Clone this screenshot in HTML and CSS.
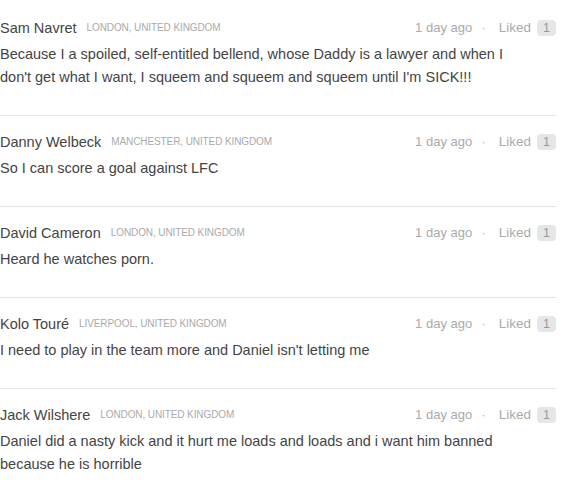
FILE: index.html
```html
<!DOCTYPE html>
<html lang="en">
<head>
    <meta charset="UTF-8">
    <title>Comments</title>
    <link rel="stylesheet" href="styles.css">
</head>
<body>
    <ul class="comments">
        <li class="comment">
            <div class="comment-head">
                <span class="author">Sam Navret</span>
                <span class="location">London, United Kingdom</span>
                <span class="meta">
                    <span class="time">1 day ago</span>
                    <span class="sep">&middot;</span>
                    <span class="liked">Liked</span>
                    <span class="count">1</span>
                </span>
            </div>
            <p class="comment-text">Because I a spoiled, self-entitled bellend, whose Daddy is a lawyer and when I don't get what I want, I squeem and squeem and squeem until I'm SICK!!!</p>
        </li>
        <li class="comment">
            <div class="comment-head">
                <span class="author">Danny Welbeck</span>
                <span class="location">Manchester, United Kingdom</span>
                <span class="meta">
                    <span class="time">1 day ago</span>
                    <span class="sep">&middot;</span>
                    <span class="liked">Liked</span>
                    <span class="count">1</span>
                </span>
            </div>
            <p class="comment-text">So I can score a goal against LFC</p>
        </li>
        <li class="comment">
            <div class="comment-head">
                <span class="author">David Cameron</span>
                <span class="location">London, United Kingdom</span>
                <span class="meta">
                    <span class="time">1 day ago</span>
                    <span class="sep">&middot;</span>
                    <span class="liked">Liked</span>
                    <span class="count">1</span>
                </span>
            </div>
            <p class="comment-text">Heard he watches porn.</p>
        </li>
        <li class="comment">
            <div class="comment-head">
                <span class="author">Kolo Touré</span>
                <span class="location">Liverpool, United Kingdom</span>
                <span class="meta">
                    <span class="time">1 day ago</span>
                    <span class="sep">&middot;</span>
                    <span class="liked">Liked</span>
                    <span class="count">1</span>
                </span>
            </div>
            <p class="comment-text">I need to play in the team more and Daniel isn't letting me</p>
        </li>
        <li class="comment">
            <div class="comment-head">
                <span class="author">Jack Wilshere</span>
                <span class="location">London, United Kingdom</span>
                <span class="meta">
                    <span class="time">1 day ago</span>
                    <span class="sep">&middot;</span>
                    <span class="liked">Liked</span>
                    <span class="count">1</span>
                </span>
            </div>
            <p class="comment-text">Daniel did a nasty kick and it hurt me loads and loads and i want him banned because he is horrible</p>
        </li>
    </ul>
</body>
</html>
```

FILE: styles.css
```css
/* Basic reset */
* {
    box-sizing: border-box;
    margin: 0;
    padding: 0;
}
body {
    font-family: 'Liberation Sans', Arial, sans-serif;
    background-color: #fff;
    color: #444;
    padding-top: 2px;
}
.comments {
    list-style: none;
    width: 556px;
}
.comment {
    padding: 16px 0 26px;
    border-bottom: 1px solid #e6e6e6;
}
/* Header row */
.comment-head {
    display: flex;
    align-items: center;
    height: 20px;
    line-height: 20px;
}
.author {
    font-size: 14.5px;
    color: #444;
}
.location {
    margin-left: 10px;
    font-size: 10px;
    letter-spacing: -0.1px;
    text-transform: uppercase;
    color: #aaa;
}
.meta {
    margin-left: auto;
    display: flex;
    align-items: center;
    font-size: 13.5px;
    color: #aaa;
}
.time {
    font-size: 13px;
}
.sep {
    margin: 0 13px 0 9px;
    color: #bbb;
}
.count {
    margin-left: 6px;
    min-width: 19px;
    height: 16px;
    line-height: 16px;
    padding: 0 5px;
    border-radius: 4px;
    background-color: #e4e6e7;
    color: #999;
    font-size: 12.5px;
    text-align: center;
}
/* Body text */
.comment-text {
    margin-top: 5px;
    max-width: 530px;
    font-size: 14.5px;
    line-height: 23px;
    color: #444;
}
```
